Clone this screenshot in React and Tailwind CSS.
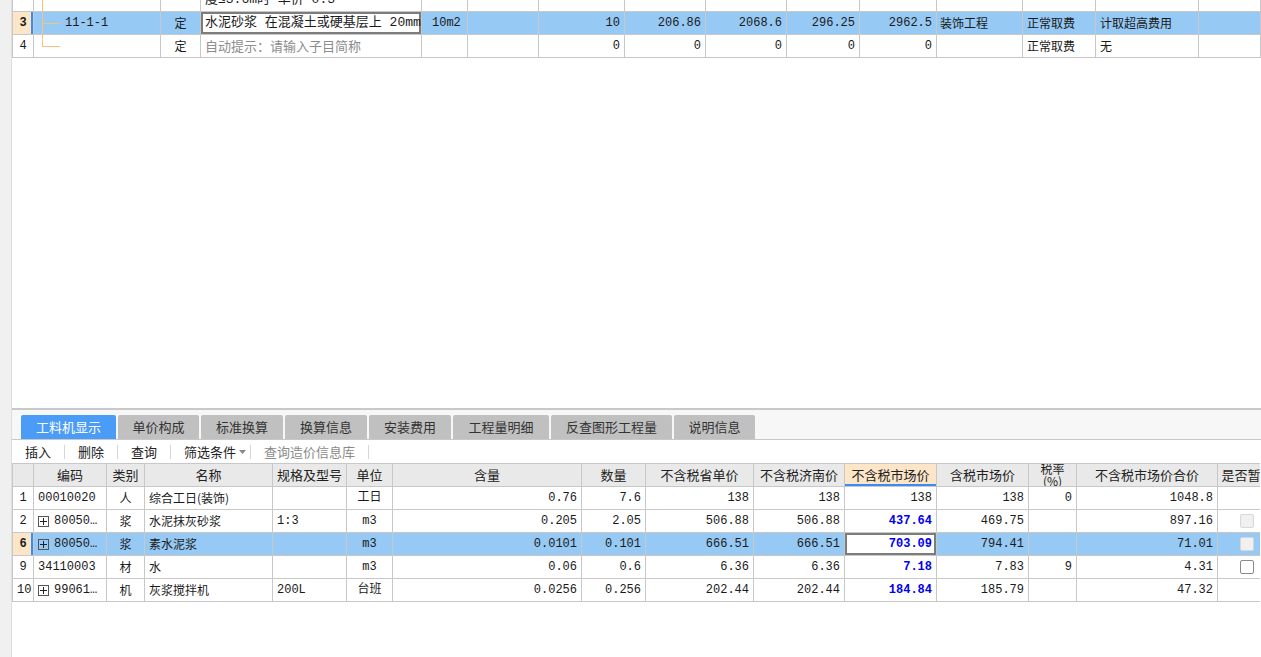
import React from "react";

const mono = { fontFamily: '"Liberation Mono", "Noto Sans CJK SC", monospace' };
const sans = { fontFamily: '"Noto Sans CJK SC", "Noto Sans", sans-serif' };

const topCols = [21, 127, 40, 221, 46, 71, 86, 81, 81, 73, 77, 86, 73, 103, 62];
const botCols = [21, 73, 38, 128, 74, 46, 189, 64, 108, 91, 92, 92, 48, 141, 60];

const base = "border border-[#c8c8c8] px-[4px] h-[23px] whitespace-nowrap overflow-hidden text-[12px]";
const cell = `${base} text-[#1a1a1a]`;

function Tree({ last }) {
  return (
    <>
      <span className={`absolute left-[8px] top-0 w-px bg-[#f6c27e] ${last ? "h-1/2" : "h-full"}`} />
      <span className="absolute left-[8px] top-1/2 h-px w-[18px] bg-[#f6c27e]" />
    </>
  );
}

function Plus() {
  return (
    <span className="mr-[5px] inline-flex h-[11px] w-[11px] items-center justify-center border border-[#555] align-[-1px]">
      <svg width="7" height="7" viewBox="0 0 7 7">
        <path d="M3.5 0v7M0 3.5h7" stroke="#222" strokeWidth="1" />
      </svg>
    </span>
  );
}

function Check({ disabled }) {
  return (
    <span
      className={`inline-block h-[14px] w-[14px] rounded-[2px] border ${
        disabled ? "border-[#d8d8d8] bg-[#f0f0f0]" : "border-[#8a8a8a] bg-white"
      }`}
    />
  );
}

function TopTable() {
  const num = `${cell} text-right`;
  return (
    <table className="-mt-[12px] table-fixed border-collapse" style={{ ...mono, width: 1248 }}>
      <colgroup>
        {topCols.map((w, i) => (
          <col key={i} style={{ width: w }} />
        ))}
      </colgroup>
      <tbody>
        <tr>
          <td className={cell} />
          <td className={`${cell} relative`}>
            <span className="absolute left-[8px] top-0 h-full w-px bg-[#f6c27e]" />
          </td>
          <td className={cell} />
          <td className={`${cell} text-[13px]`}>度≤3.6m时 单价*0.3</td>
          {topCols.slice(4).map((_, i) => (
            <td key={i} className={cell} />
          ))}
        </tr>
        <tr className="bg-[#96c9f4]">
          <td className={`${cell} bg-[#fde5c8] text-center font-bold shadow-[inset_-2px_0_0_#3b8cf0]`}>3</td>
          <td className={`${cell} relative pl-[31px]`}>
            <Tree />
            11-1-1
          </td>
          <td className={`${cell} text-center`} style={sans}>定</td>
          <td className={`${base} bg-white text-[13px] text-[#1a1a1a] shadow-[inset_0_0_0_2px_#7c7c7c]`}>水泥砂浆 在混凝土或硬基层上 20mm</td>
          <td className={`${cell} pl-[10px]`}>10m2</td>
          <td className={cell} />
          <td className={num}>10</td>
          <td className={num}>206.86</td>
          <td className={num}>2068.6</td>
          <td className={num}>296.25</td>
          <td className={num}>2962.5</td>
          <td className={`${cell} pl-[3px]`} style={sans}>装饰工程</td>
          <td className={cell} style={sans}>正常取费</td>
          <td className={cell} style={sans}>计取超高费用</td>
          <td className={cell} />
        </tr>
        <tr>
          <td className={`${cell} text-center`}>4</td>
          <td className={`${cell} relative`}>
            <Tree last />
          </td>
          <td className={`${cell} text-center`} style={sans}>定</td>
          <td className={`${base} text-[13px] text-[#8c8c8c]`} style={sans}>自动提示：请输入子目简称</td>
          <td className={cell} />
          <td className={cell} />
          <td className={num}>0</td>
          <td className={num}>0</td>
          <td className={num}>0</td>
          <td className={num}>0</td>
          <td className={num}>0</td>
          <td className={cell} />
          <td className={cell} style={sans}>正常取费</td>
          <td className={cell} style={sans}>无</td>
          <td className={cell} />
        </tr>
      </tbody>
    </table>
  );
}

const headers = ["", "编码", "类别", "名称", "规格及型号", "单位", "含量", "数量", "不含税省单价", "不含税济南价", "不含税市场价", "含税市场价", "税率", "不含税市场价合价", "是否暂估"];

const rows = [
  { n: "1", code: "00010020", plus: false, type: "人", name: "综合工日(装饰)", spec: "", unit: "工日", qty: "0.76", amt: "7.6", p1: "138", p2: "138", mk: "138", mkBlue: false, tax: "138", rate: "0", total: "1048.8", chk: null },
  { n: "2", code: "80050…", plus: true, type: "浆", name: "水泥抹灰砂浆", spec: "1:3", unit: "m3", qty: "0.205", amt: "2.05", p1: "506.88", p2: "506.88", mk: "437.64", mkBlue: true, tax: "469.75", rate: "", total: "897.16", chk: "disabled" },
  { n: "6", code: "80050…", plus: true, type: "浆", name: "素水泥浆", spec: "", unit: "m3", qty: "0.0101", amt: "0.101", p1: "666.51", p2: "666.51", mk: "703.09", mkBlue: true, tax: "794.41", rate: "", total: "71.01", chk: "disabled", sel: true },
  { n: "9", code: "34110003", plus: false, type: "材", name: "水", spec: "", unit: "m3", qty: "0.06", amt: "0.6", p1: "6.36", p2: "6.36", mk: "7.18", mkBlue: true, tax: "7.83", rate: "9", total: "4.31", chk: "on" },
  { n: "10", code: "99061…", plus: true, type: "机", name: "灰浆搅拌机", spec: "200L", unit: "台班", qty: "0.0256", amt: "0.256", p1: "202.44", p2: "202.44", mk: "184.84", mkBlue: true, tax: "185.79", rate: "", total: "47.32", chk: null },
];

function BottomTable() {
  const head = "border border-[#c8c8c8] h-[23px] bg-[#e9e9e9] text-center text-[13px] text-[#222] font-normal whitespace-nowrap overflow-hidden px-[2px]";
  const num = `${cell} text-right`;
  return (
    <div className="w-[1248px] overflow-hidden">
      <table className="table-fixed border-collapse" style={{ ...mono, width: 1265 }}>
        <colgroup>
          {botCols.map((w, i) => (
            <col key={i} style={{ width: w }} />
          ))}
        </colgroup>
        <thead>
          <tr style={sans}>
            {headers.map((h, i) => {
              if (i === 10)
                return (
                  <th key={i} className={`${head} bg-[#fde5c8] font-bold shadow-[inset_0_-2px_0_#3b8cf0]`}>
                    {h}
                  </th>
                );
              if (i === 12)
                return (
                  <th key={i} className={`${head} p-0`}>
                    <div className="flex h-[22px] flex-col items-center justify-center overflow-hidden text-[12px] leading-[12px]">
                      <span>税率</span>
                      <span>(%)</span>
                    </div>
                  </th>
                );
              return (
                <th key={i} className={head}>
                  {h}
                </th>
              );
            })}
          </tr>
        </thead>
        <tbody>
          {rows.map((r) => (
            <tr key={r.n} className={r.sel ? "bg-[#96c9f4]" : ""}>
              <td
                className={`${cell} px-0 text-center ${r.sel ? "bg-[#fde5c8] font-bold shadow-[inset_-2px_0_0_#3b8cf0]" : ""}`}
              >
                {r.n}
              </td>
              <td className={`${cell} px-[3px]`}>
                {r.plus && <Plus />}
                {r.code}
              </td>
              <td className={`${cell} text-center`} style={sans}>{r.type}</td>
              <td className={cell} style={sans}>{r.name}</td>
              <td className={cell}>{r.spec}</td>
              <td className={`${cell} text-center`}>{r.unit}</td>
              <td className={num}>{r.qty}</td>
              <td className={num}>{r.amt}</td>
              <td className={num}>{r.p1}</td>
              <td className={num}>{r.p2}</td>
              <td
                className={`${base} text-right ${r.mkBlue ? "font-bold text-[#0000ee]" : "text-[#1a1a1a]"} ${
                  r.sel ? "bg-white shadow-[inset_0_0_0_2px_#7c7c7c]" : ""
                }`}
              >
                {r.mk}
              </td>
              <td className={num}>{r.tax}</td>
              <td className={num}>{r.rate}</td>
              <td className={num}>{r.total}</td>
              <td className={`${cell} pl-[22px]`}>
                {r.chk && (
                  <span className="flex items-center">
                    <Check disabled={r.chk === "disabled"} />
                  </span>
                )}
              </td>
            </tr>
          ))}
        </tbody>
      </table>
    </div>
  );
}

const tabs = [
  ["工料机显示", 95],
  ["单价构成", 81],
  ["标准换算", 82],
  ["换算信息", 82],
  ["安装费用", 82],
  ["工程量明细", 96],
  ["反查图形工程量", 121],
  ["说明信息", 81],
];

function Sep({ className = "mx-[13px]" }) {
  return <span className={`h-[14px] w-px bg-[#d6d6d6] ${className}`} />;
}

function Toolbar() {
  return (
    <div className="flex h-[23px] items-center pl-[13px] text-[13px] text-[#222]" style={sans}>
      <span>插入</span>
      <Sep />
      <span>删除</span>
      <Sep />
      <span>查询</span>
      <Sep />
      <span className="flex items-center">
        筛选条件
        <svg width="7" height="4" viewBox="0 0 7 4" className="ml-[3px]">
          <path d="M0 0h7L3.5 4z" fill="#888" />
        </svg>
      </span>
      <Sep className="ml-[4px] mr-[13px]" />
      <span className="text-[#8a8a8a]">查询造价信息库</span>
      <Sep />
    </div>
  );
}

export default function App() {
  return (
    <div className="flex h-[657px] w-[1261px] overflow-hidden bg-white">
      <div className="w-[12px] shrink-0 border-r border-[#dedede] bg-[#f0f0f0]" />
      <div className="flex min-w-0 flex-1 flex-col">
        <div className="h-[408px] shrink-0 overflow-hidden">
          <TopTable />
        </div>
        <div className="h-[2px] shrink-0 bg-[#c8c8c8]" />
        <div className="flex h-[30px] shrink-0 items-end gap-[2px] border-b border-[#c8c8c8] bg-[#f7f7f7] pl-[9px]" style={sans}>
          {tabs.map(([t, w], i) => (
            <div
              key={t}
              style={{ width: w }}
              className={`flex h-[24px] items-center justify-center rounded-t-[2px] text-[13px] ${
                i === 0 ? "bg-[#4a9cf7] text-white" : "bg-[#c0c0c0] text-[#333]"
              }`}
            >
              {t}
            </div>
          ))}
        </div>
        <Toolbar />
        <BottomTable />
      </div>
    </div>
  );
}
